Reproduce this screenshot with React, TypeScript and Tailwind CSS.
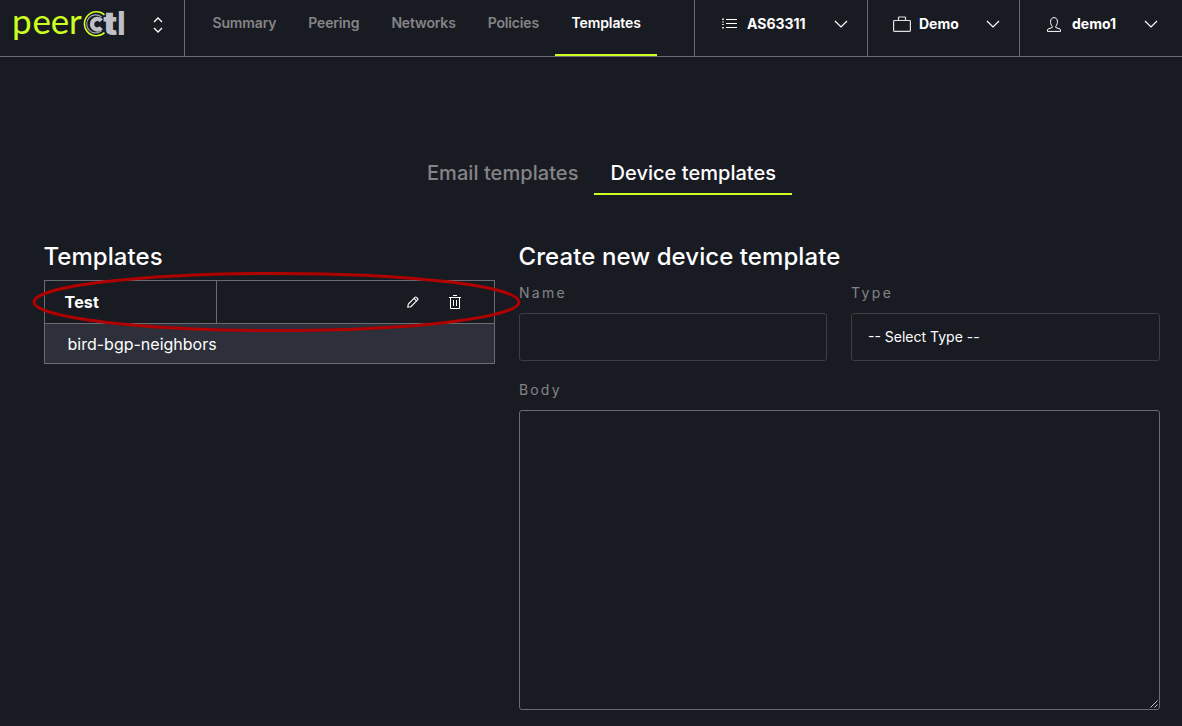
import React from "react";

const navItems = ["Summary", "Peering", "Networks", "Policies", "Templates"];

function Logo() {
  return (
    <svg width="124" height="48" viewBox="6 0 124 48" className="block overflow-visible">
      <text x="11.9 32.5 50.8 68.9" y="34.2" fill="#ccff1f" fontFamily="Lato, sans-serif" fontSize="35">
        peer
      </text>
      <path d="M104.500 14.900A12 12 0 1 0 104.500 32.700" fill="none" stroke="#ccff1f" strokeWidth="1.6" />
      <path d="M101.500 17A9 9 0 1 0 101.500 30.800" fill="none" stroke="#a8a9b2" strokeWidth="1.1" />
      <path d="M101.300 20.700A5.300 5.300 0 1 0 101.300 27.700" fill="none" stroke="#bfc0c6" strokeWidth="4.400" />
      <text x="103.3" y="34.7" fill="#bfc0c6" fontFamily="Inter, sans-serif" fontWeight="900" fontSize="32" textLength="14" lengthAdjust="spacingAndGlyphs">
        t
      </text>
      <text x="117.2" y="34.7" fill="#bfc0c6" fontFamily="Inter, sans-serif" fontWeight="800" fontSize="32" textLength="8.200" lengthAdjust="spacingAndGlyphs">
        l
      </text>
    </svg>
  );
}

function Chevron() {
  return (
    <svg width="14" height="8" viewBox="0 0 14 8" fill="none" stroke="#fff" strokeWidth="1.2">
      <path d="M1 1l6 6 6-6" />
    </svg>
  );
}

function ListIcon() {
  return (
    <svg width="15" height="12" viewBox="0 0 15 12" className="block" fill="#fff">
      <path d="M4 1h11v1H4zM4 5h11v1H4zM4 9h11v1H4z" />
      <path d="M0 0.5h2v1.4H0zM0 3.5h2v1H0zM0 6h2v1H0zM0 9h2v1.4H0z" opacity=".8" />
    </svg>
  );
}

function BriefcaseIcon() {
  return (
    <svg width="18" height="16" viewBox="0 0 18 16" className="block" fill="none" stroke="#e0e0e2" strokeWidth="1.2">
      <rect x=".6" y="4.5" width="16.8" height="10.8" rx=".8" />
      <path d="M5.500 4.500V1.600q0-.6.6-.6h5.800q.6 0 .6.600v2.900" />
    </svg>
  );
}

function UserIcon() {
  return (
    <svg width="14" height="15" viewBox="0 0 14 15" className="block" fill="none" stroke="#fff" strokeWidth="1">
      <path d="M5.2 9.2C2.8 7 2.7.6 7 .6s4.200 6.400 1.800 8.600v1.300l4.100 1.500q.6.300.6 1v1.400H.5V13q0-.7.6-1l4.100-1.500z" />
    </svg>
  );
}

function PencilIcon() {
  return (
    <svg width="12" height="12" viewBox="0 0 12 12" className="block" fill="none" stroke="#fff" strokeWidth="1.1">
      <path d="M.8 11.200l.5-3.100L8 1.300q.7-.7 1.400 0l1.200 1.200q.7.700 0 1.400L3.900 10.700zM7 2.400l2.500 2.500" />
    </svg>
  );
}

function TrashIcon() {
  return (
    <svg width="12" height="14" viewBox="0 0 12 14" className="block" fill="none" stroke="#fff" strokeWidth="1">
      <path d="M0 2.500h12M4 .5h4M1.500 2.500v11h9v-11M4.500 5v6M7.500 5v6" />
    </svg>
  );
}

function Header() {
  return (
    <header className="flex h-[57px] border-b border-[#6b6c72]">
      <div className="flex w-[185px] shrink-0 border-r border-[#6b6c72] pl-1.5">
        <Logo />
        <svg width="10" height="16" viewBox="0 0 10 16" className="ml-[23px] mt-[17px]" fill="none" stroke="#fff" strokeWidth="1.3">
          <path d="M1 5l4-4 4 4M1 11l4 4 4-4" />
        </svg>
      </div>
      <nav className="flex w-[510px] shrink-0 border-r border-[#6b6c72] pl-[11.5px] text-[14px] font-semibold tracking-[-0.16px] text-[#848486]">
        {navItems.map((item) => (
          <a
            key={item}
            className={
              item === "Templates"
                ? "h-[56px] w-[102px] border-b-2 border-[#ccff1f] pl-[16.5px] pt-[13px] leading-[20px] tracking-[-0.1px] text-white"
                : "h-[56px] px-4 pt-[13px] leading-[20px]"
            }
          >
            {item}
          </a>
        ))}
      </nav>
      <div className="flex w-[173px] shrink-0 items-center border-r border-[#6b6c72] pb-2 pl-[27px] pr-[19px] text-[14px] font-bold">
        <ListIcon />
        <span className="ml-[10px] flex-1 pb-px">AS63311</span>
        <Chevron />
      </div>
      <div className="flex w-[152px] shrink-0 items-center border-r border-[#6b6c72] pb-2 pl-[25px] pr-[19px] text-[14px] font-bold">
        <BriefcaseIcon />
        <span className="ml-[8px] flex-1 pb-px">Demo</span>
        <Chevron />
      </div>
      <div className="flex flex-1 items-center pb-2 pl-[27px] pr-[24px] text-[14px] font-bold">
        <UserIcon />
        <span className="ml-[11px] flex-1 pb-px">demo1</span>
        <Chevron />
      </div>
    </header>
  );
}

export default function App() {
  return (
    <div className="h-[726px] w-[1182px] overflow-hidden bg-[#191b23] font-['Inter',sans-serif] text-white">
      <Header />
      <div className="flex whitespace-nowrap pl-[411px] pt-[93px] text-[20px] font-medium">
        <div className="h-[45px] w-[183px] pl-4 pt-[8px] leading-[30px] tracking-[0.06px] text-[#848486]">Email templates</div>
        <div className="h-[45px] w-[198px] border-b-2 border-[#ccff1f] pl-[16.5px] pt-[8px] leading-[30px] tracking-[0.04px]">Device templates</div>
      </div>
      <main className="flex gap-6 pl-[44px] pr-[22px] pt-[46px]">
        <section className="relative w-[451px] shrink-0">
          <h2 className="-ml-[0.6px] h-[39px] text-[24px] font-medium leading-[32px] tracking-[0.07px]">Templates</h2>
          <div className="border border-[#6b6c72]">
            <div className="flex h-[43px] border-b border-[#6b6c72]">
              <div className="flex w-[172px] items-center border-r border-[#6b6c72] pl-[19.5px] text-[16px] font-bold tracking-[0.2px]">Test</div>
              <div className="flex flex-1 items-center justify-end gap-[30.5px] pr-[33px]">
                <PencilIcon />
                <TrashIcon />
              </div>
            </div>
            <div className="flex h-[39px] items-center bg-[#2d2f3a] pl-[22.5px] text-[16px]">bird-bgp-neighbors</div>
          </div>
          <svg className="absolute -left-[12px] top-[30px]" width="490" height="62" viewBox="0 0 490 62" fill="none">
            <ellipse cx="244.500" cy="31" rx="242.500" ry="28.500" stroke="#b00000" strokeWidth="3" />
          </svg>
        </section>
        <section className="flex-1">
          <h2 className="-ml-[0.5px] h-[39px] text-[24px] font-medium leading-[32px] tracking-[0.08px]">Create new device template</h2>
          <div className="flex gap-6">
            <div className="w-[308px]">
              <label className="block h-[33px] pt-[3px] text-[14px] leading-[20px] tracking-[2.25px] text-[#848486]">Name</label>
              <div className="h-[48px] rounded-[3px] border border-[#3d3e42]" />
            </div>
            <div className="flex-1">
              <label className="block h-[33px] pt-[3px] text-[14px] leading-[20px] tracking-[2.4px] text-[#848486]">Type</label>
              <div className="flex h-[48px] items-center rounded-[3px] border border-[#3d3e42] pb-0.5 pl-4 text-[14px]">-- Select Type --</div>
            </div>
          </div>
          <label className="mt-[16px] block h-[33px] pt-[3px] text-[14px] leading-[20px] tracking-[2.15px] text-[#848486]">Body</label>
          <div className="flex h-[300px] items-end justify-end rounded-[3px] border border-[#6b6c72] pb-px pr-px">
            <svg width="8" height="8" viewBox="0 0 8 8" stroke="#c8c8cc" strokeWidth="1">
              <path d="M0.500 7.500l7-7M4.500 7.500l3-3" />
            </svg>
          </div>
        </section>
      </main>
    </div>
  );
}
